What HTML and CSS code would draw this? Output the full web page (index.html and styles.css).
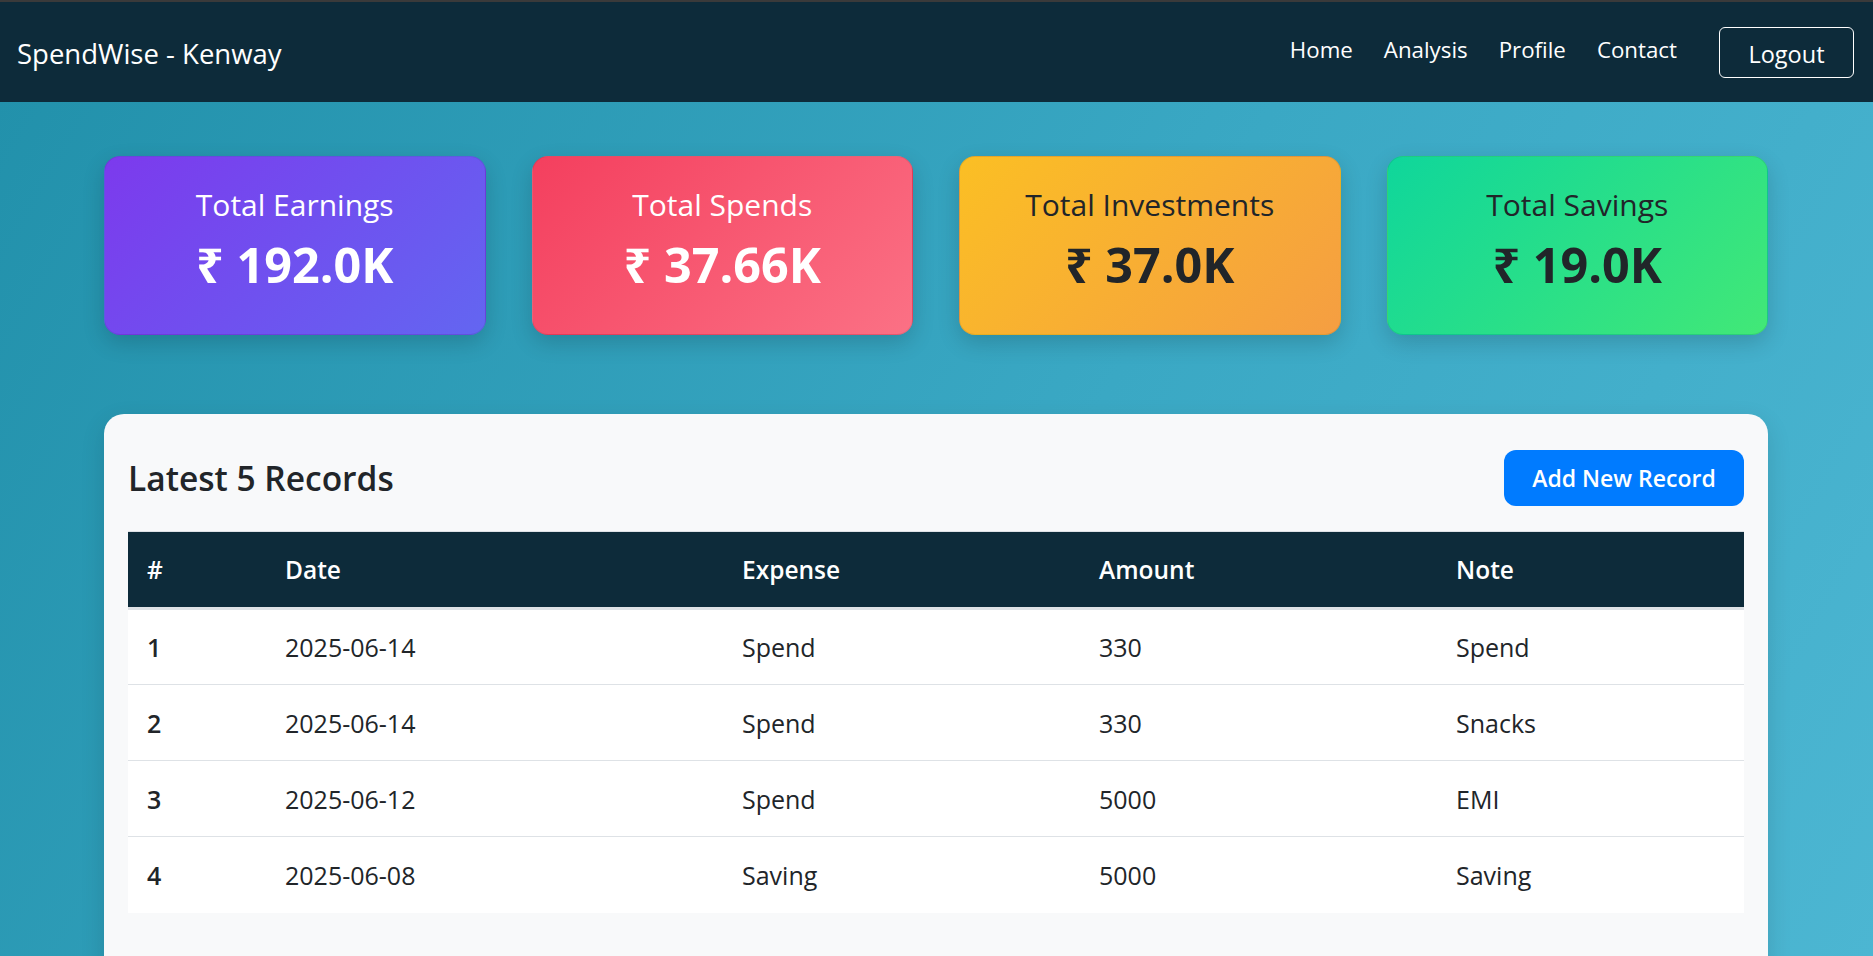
FILE: index.html
```html
<!DOCTYPE html>
<html lang="en">
<head>
<meta charset="utf-8">
<title>SpendWise - Kenway</title>
<link rel="stylesheet" href="styles.css">
</head>
<body>
<header class="navbar">
  <a class="brand" href="#">SpendWise - Kenway</a>
  <nav class="nav">
    <a class="nav-link" href="#">Home</a>
    <a class="nav-link" href="#">Analysis</a>
    <a class="nav-link" href="#">Profile</a>
    <a class="nav-link" href="#">Contact</a>
    <button class="btn-logout" type="button">Logout</button>
  </nav>
</header>

<main class="container">
  <section class="stats">
    <div class="stat stat-earn">
      <h5 class="stat-title">Total Earnings</h5>
      <h2 class="stat-value">₹ 192.0K</h2>
    </div>
    <div class="stat stat-spend">
      <h5 class="stat-title">Total Spends</h5>
      <h2 class="stat-value">₹ 37.66K</h2>
    </div>
    <div class="stat stat-invest">
      <h5 class="stat-title">Total Investments</h5>
      <h2 class="stat-value">₹ 37.0K</h2>
    </div>
    <div class="stat stat-save">
      <h5 class="stat-title">Total Savings</h5>
      <h2 class="stat-value">₹ 19.0K</h2>
    </div>
  </section>

  <section class="records">
    <div class="records-head">
      <h4 class="records-title">Latest 5 Records</h4>
      <button class="btn-add" type="button">Add New Record</button>
    </div>
    <table class="table">
      <thead>
        <tr>
          <th class="c-num">#</th>
          <th class="c-date">Date</th>
          <th class="c-exp">Expense</th>
          <th class="c-amt">Amount</th>
          <th class="c-note">Note</th>
        </tr>
      </thead>
      <tbody>
        <tr><th>1</th><td>2025-06-14</td><td>Spend</td><td>330</td><td>Spend</td></tr>
        <tr><th>2</th><td>2025-06-14</td><td>Spend</td><td>330</td><td>Snacks</td></tr>
        <tr><th>3</th><td>2025-06-12</td><td>Spend</td><td>5000</td><td>EMI</td></tr>
        <tr><th>4</th><td>2025-06-08</td><td>Saving</td><td>5000</td><td>Saving</td></tr>
      </tbody>
    </table>
  </section>
</main>
</body>
</html>
```

FILE: styles.css
```css
* { box-sizing: border-box; }

html, body {
  margin: 0;
  padding: 0;
}

body {
  height: 956px;
  font-family: "Open Sans", "Noto Sans", "DejaVu Sans", sans-serif;
  color: #212529;
  background: linear-gradient(120deg, #2190aa 0%, #3aa8c4 55%, #4cb6d2 100%);
  border-top: 2px solid #3a3a3a;
  overflow: hidden;
}

.navbar {
  height: 100px;
  background: #0d2b3a;
  display: flex;
  align-items: center;
  justify-content: space-between;
  padding: 0 19px 0 17px;
}

.brand {
  color: #fff;
  text-decoration: none;
  font-size: 27.5px;
  line-height: 1;
  margin-top: 3px;
}

.nav {
  display: flex;
  align-items: center;
}

.nav-link {
  color: #fff;
  text-decoration: none;
  font-size: 22.3px;
  margin-left: 31px;
  margin-top: -6px;
}

.btn-logout {
  margin-left: 42px;
  width: 135px;
  height: 51px;
  background: transparent;
  border: 1px solid #fff;
  border-radius: 6px;
  color: #fff;
  font-family: inherit;
  font-size: 23.5px;
  padding: 3px 0 0;
}

.container {
  width: 1664px;
  margin: 54px 0 0 104px;
}

.stats {
  display: grid;
  grid-template-columns: repeat(4, 1fr);
  gap: 46px;
}

.stat {
  height: 179px;
  border-radius: 16px;
  text-align: center;
  padding-top: 29px;
  box-shadow: 0 8px 22px rgba(0, 0, 0, 0.16);
  border: 1px solid rgba(0, 0, 0, 0.08);
}

.stat-title {
  margin: 0;
  font-size: 30px;
  font-weight: 500;
  line-height: 38px;
}

.stat-value {
  margin: 11px 0 0;
  font-size: 48.5px;
  font-weight: 700;
  line-height: 58px;
}

.stat-earn { background: linear-gradient(135deg, #7c3aed, #6366f1); color: #fff; }
.stat-spend { background: linear-gradient(135deg, #f43f5e, #fb7185); color: #fff; }
.stat-invest { background: linear-gradient(135deg, #fbbf24, #f59e42); color: #212529; }
.stat-save { background: linear-gradient(135deg, #0fd69b, #42e877); color: #212529; }

.records {
  margin-top: 79px;
  background: #f8f9fa;
  border-radius: 20px;
  padding: 36px 24px 80px;
  box-shadow: 0 8px 24px rgba(0, 0, 0, 0.12);
}

.records-head {
  display: flex;
  align-items: center;
  justify-content: space-between;
  margin-bottom: 25px;
}

.records-title {
  margin: 0;
  font-size: 33.5px;
  font-weight: 600;
  line-height: 40px;
}

.btn-add {
  width: 240px;
  height: 56px;
  background: #007bff;
  color: #fff;
  border: none;
  border-radius: 12px;
  font-family: inherit;
  font-size: 23px;
  font-weight: 600;
}

.table {
  width: 100%;
  border-collapse: collapse;
  table-layout: fixed;
  font-size: 25px;
}

.table thead th {
  background: #0d2b3a;
  color: #fff;
  font-size: 24.5px;
  font-weight: 600;
  text-align: left;
  height: 77px;
  padding: 0 19px;
  border-top: 1px solid #dee2e6;
  border-bottom: 3px solid #dee2e6;
}

.c-num { width: 138px; }
.c-date { width: 457px; }
.c-exp { width: 357px; }
.c-amt { width: 357px; }

.table tbody th,
.table tbody td {
  background: #fff;
  height: 76px;
  padding: 0 19px;
  text-align: left;
  border-bottom: 1px solid #dee2e6;
}

.table tbody th { font-weight: 600; }
.table tbody td { font-weight: 400; }

.table tbody tr:last-child th,
.table tbody tr:last-child td {
  border-bottom: none;
}
```
